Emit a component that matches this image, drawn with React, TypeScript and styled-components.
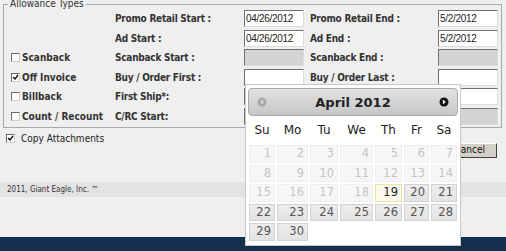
import React from "react";
import styled, { createGlobalStyle } from "styled-components";

const GlobalStyle = createGlobalStyle`
  html, body {
    margin: 0;
    padding: 0;
  }
  body {
    background: #efefef;
    font-family: "DejaVu Sans Condensed", "DejaVu Sans", sans-serif;
    overflow: hidden;
  }
`;

const Page = styled.div`
  position: relative;
  width: 506px;
  height: 251px;
  display: flex;
  flex-direction: column;
  overflow: hidden;
`;

const Fieldset = styled.fieldset`
  margin: -2px 4px 0 3px;
  padding: 0 3px 2px 7px;
  border: 1px solid #a9a9a9;
  min-width: 0;
`;

const Legend = styled.legend`
  margin-left: -3px;
  padding: 0 2px;
  font-size: 10px;
  line-height: 12px;
  color: #333;
`;

const Grid = styled.div`
  display: grid;
  grid-template-columns: 104px 129px 60px 134px 60px;
  grid-auto-rows: 17px;
  row-gap: 2.6px;
  align-items: center;
`;

const Label = styled.span<{ $right?: boolean }>`
  padding-left: ${(p) => (p.$right ? "6px" : "0")};
  font-size: 10px;
  font-weight: bold;
  letter-spacing: -0.25px;
  color: #333;
  white-space: nowrap;
`;

const DateInput = styled.input`
  box-sizing: border-box;
  width: 60px;
  height: 17px;
  margin: 0;
  padding: 0 1px;
  border: 1px solid;
  border-color: #6f6f6f #dcdcdc #dcdcdc #6f6f6f;
  background: ${(p) => (p.disabled ? "#d4d4d4" : "#fff")};
  font-family: "Liberation Sans", Arial, sans-serif;
  font-size: 10px;
  letter-spacing: -0.3px;
  color: #222;
  outline: none;
`;

const CheckLabel = styled.label`
  display: flex;
  align-items: center;
  gap: 2px;
  font-size: 10px;
  color: #222;
  white-space: nowrap;
`;

const BoldCheckLabel = styled(CheckLabel)`
  font-weight: bold;
  color: #333;
`;

const Box = styled.span`
  box-sizing: border-box;
  width: 9px;
  height: 9px;
  display: inline-flex;
  border: 1px solid;
  border-color: #6a6a6a #cfcfcf #cfcfcf #6a6a6a;
  background: #fff;
`;

const Check = ({ checked }: { checked?: boolean }) => (
  <Box>
    {checked && (
      <svg width="7" height="7" viewBox="0 0 7 7">
        <path d="M1 3 L3 5 L6 1" stroke="#111" strokeWidth="1.4" fill="none" />
      </svg>
    )}
  </Box>
);

const ActionRow = styled.div`
  display: flex;
  justify-content: space-between;
  align-items: flex-start;
  padding: 5px 9px 0 6px;
`;

const CopyLabel = styled(CheckLabel)`
  gap: 6px;
  font-size: 10px;
`;

const Buttons = styled.div`
  display: flex;
  gap: 4px;
  padding-top: 10px;
`;

const Button = styled.button`
  height: 15px;
  padding: 0 11px 0 6px;
  border: 1px solid;
  border-color: #fff #404040 #404040 #fff;
  background: #d4d0c8;
  font-family: "DejaVu Sans Condensed", sans-serif;
  font-size: 10px;
  line-height: 12px;
  color: #111;
`;

const Footer = styled.div`
  margin-top: 24px;
  height: 15px;
  padding-left: 7px;
  background: #e3e3e3;
  font-size: 8px;
  line-height: 15px;
  color: #333;
`;

const BottomBar = styled.div`
  margin-top: auto;
  height: 14px;
  background: #12304e;
`;

/* datepicker popup */

const Picker = styled.div`
  position: absolute;
  left: 245px;
  top: 84px;
  box-sizing: border-box;
  width: 216px;
  height: 162px;
  padding: 3px 2px 2px;
  border: 1px solid #c8c8c8;
  background: #fff;
  font-family: "DejaVu Sans", Verdana, sans-serif;
`;

const PickerHeader = styled.div`
  box-sizing: border-box;
  height: 28px;
  display: flex;
  align-items: center;
  justify-content: space-between;
  padding: 0 8px;
  border: 1px solid #aaa;
  border-radius: 4px;
  background: linear-gradient(#e2e2e2, #c6c6c6);
`;

const Title = styled.span`
  font-size: 13px;
  font-weight: bold;
  color: #222;
`;

const Nav = styled.svg<{ $disabled?: boolean }>`
  display: block;
  opacity: ${(p) => (p.$disabled ? 0.45 : 1)};
`;

const Table = styled.table`
  width: 210px;
  table-layout: fixed;
  border-collapse: collapse;
`;

const Th = styled.th`
  height: 28px;
  padding: 0;
  font-size: 12px;
  font-weight: normal;
  color: #222;
  text-align: center;
`;

const Td = styled.td`
  height: 19.5px;
  padding: 0 1px;
`;

const Day = styled.span<{ $state: "off" | "on" | "today" }>`
  display: block;
  box-sizing: border-box;
  height: 17.5px;
  padding-right: 3px;
  border: 1px solid ${(p) => (p.$state === "today" ? "#f2e49a" : "#d3d3d3")};
  background: ${(p) =>
    p.$state === "today" ? "#fbf9ee" : "linear-gradient(#ececec, #e3e3e3)"};
  font-size: 11.5px;
  line-height: 15.5px;
  text-align: right;
  color: ${(p) => (p.$state === "today" ? "#222" : "#555")};
  opacity: ${(p) => (p.$state === "off" ? 0.35 : 1)};
`;

const colWidths = [28, 33, 30, 35, 29, 27, 28];
const weekdays = ["Su", "Mo", "Tu", "We", "Th", "Fr", "Sa"];

const weeks: (number | null)[][] = [
  [1, 2, 3, 4, 5, 6, 7],
  [8, 9, 10, 11, 12, 13, 14],
  [15, 16, 17, 18, 19, 20, 21],
  [22, 23, 24, 25, 26, 27, 28],
  [29, 30, null, null, null, null, null],
];

const Calendar = () => (
  <Picker>
    <PickerHeader>
      <Nav $disabled width="10" height="10" viewBox="0 0 10 10">
        <circle cx="5" cy="5" r="4.5" fill="#777" />
        <path d="M6.2 2.6 L3.2 5 L6.2 7.4Z" fill="#ddd" />
      </Nav>
      <Title>April 2012</Title>
      <Nav width="10" height="10" viewBox="0 0 10 10">
        <circle cx="5" cy="5" r="4.5" fill="#111" />
        <path d="M3.8 2.6 L6.8 5 L3.8 7.4Z" fill="#fff" />
      </Nav>
    </PickerHeader>
    <Table>
      <colgroup>
        {colWidths.map((w, i) => (
          <col key={i} style={{ width: w }} />
        ))}
      </colgroup>
      <thead>
        <tr>
          {weekdays.map((d) => (
            <Th key={d}>{d}</Th>
          ))}
        </tr>
      </thead>
      <tbody>
        {weeks.map((week, i) => (
          <tr key={i}>
            {week.map((d, j) => (
              <Td key={j}>
                {d && (
                  <Day $state={d < 19 ? "off" : d === 19 ? "today" : "on"}>{d}</Day>
                )}
              </Td>
            ))}
          </tr>
        ))}
      </tbody>
    </Table>
  </Picker>
);

type Row = {
  check?: string;
  checked?: boolean;
  left: string;
  leftValue?: string;
  leftDisabled?: boolean;
  right: string;
  rightValue?: string;
  rightDisabled?: boolean;
};

const rows: Row[] = [
  { left: "Promo Retail Start :", leftValue: "04/26/2012", right: "Promo Retail End :", rightValue: "5/2/2012" },
  { left: "Ad Start :", leftValue: "04/26/2012", right: "Ad End :", rightValue: "5/2/2012" },
  { check: "Scanback", left: "Scanback Start :", leftDisabled: true, right: "Scanback End :", rightDisabled: true },
  { check: "Off Invoice", checked: true, left: "Buy / Order First :", right: "Buy / Order Last :" },
  { check: "Billback", left: "First Ship*:", right: "Last Ship*:" },
  { check: "Count / Recount", left: "C/RC Start:", leftDisabled: true, right: "C/RC End:", rightDisabled: true },
];

export default function App() {
  return (
    <Page>
      <GlobalStyle />
      <Fieldset>
        <Legend>Allowance Types</Legend>
        <Grid>
          {rows.map((r) => (
            <React.Fragment key={r.left}>
              {r.check ? (
                <BoldCheckLabel>
                  <Check checked={r.checked} />
                  {r.check}
                </BoldCheckLabel>
              ) : (
                <span />
              )}
              <Label>{r.left}</Label>
              <DateInput readOnly value={r.leftValue ?? ""} disabled={r.leftDisabled} />
              <Label $right>{r.right}</Label>
              <DateInput readOnly value={r.rightValue ?? ""} disabled={r.rightDisabled} />
            </React.Fragment>
          ))}
        </Grid>
      </Fieldset>
      <ActionRow>
        <CopyLabel>
          <Check checked />
          Copy Attachments
        </CopyLabel>
        <Buttons>
          <Button>Save</Button>
          <Button>Cancel</Button>
        </Buttons>
      </ActionRow>
      <Footer>2011, Giant Eagle, Inc. ™</Footer>
      <BottomBar />
      <Calendar />
    </Page>
  );
}
